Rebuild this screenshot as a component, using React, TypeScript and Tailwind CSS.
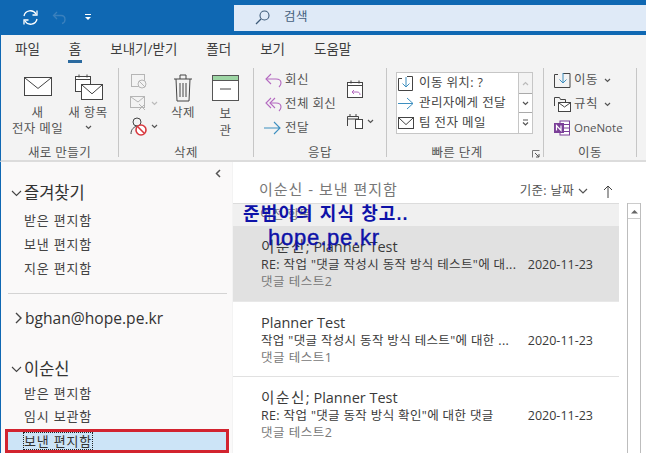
import React from "react";

const font = { fontFamily: '"Open Sans","Noto Sans CJK KR",sans-serif' };

const S = ({ w, h, children, className = "" }: { w: number; h: number; children: React.ReactNode; className?: string }) => (
  <svg width={w} height={h} viewBox={`0 0 ${w} ${h}`} fill="none" className={`shrink-0 ${className}`}>{children}</svg>
);

const Chev = ({ c = "#555" }: { c?: string }) => (
  <S w={7} h={5}><path d="M1 1l2.500 2.500L6 1" stroke={c} strokeWidth="1.2" /></S>
);

const Mail = ({ w = 28, h = 19 }: { w?: number; h?: number }) => (
  <S w={w} h={h}><rect x=".5" y=".5" width={w - 1} height={h - 1} fill="#fff" stroke="#444" /><path d={`M1 1l${w / 2 - 1} ${h * 0.55}L${w - 1} 1`} stroke="#444" /></S>
);

const Divider = () => <div className="w-px h-[89px] bg-[#c6c6c6] shrink-0" />;

const Group = ({ label, w, labelCls = "", children }: { label: string; w: number; labelCls?: string; children: React.ReactNode }) => (
  <div className="flex flex-col shrink-0 relative" style={{ width: w }}>
    <div className="h-[77px] flex">{children}</div>
    <div className={`text-center h-[16px] leading-[16px] text-[#555] ${labelCls}`}>{label}</div>
  </div>
);

const Reply = ({ color, double }: { color: string; double?: boolean }) => (
  <S w={20} h={16}>
    <path d="M7 2L2 7l5 5" stroke={color} strokeWidth="1.1" />
    {double && <path d="M11 2L6 7l5 5" stroke={color} strokeWidth="1.1" />}
    <path d={double ? "M6 7h6c4 0 5 2 5 4s-1 3-2 4" : "M2 7h10c4 0 5 2 5 4s-1 3-2 4"} stroke={color} strokeWidth="1.1" />
  </S>
);

const Fwd = () => (
  <S w={18} h={14}><path d="M0 7h16M10 1l6 6-6 6" stroke="#3d8fc0" strokeWidth="1.1" /></S>
);

const CalBase = ({ children }: { children?: React.ReactNode }) => (
  <S w={18} h={20}>
    <rect x="1.500" y="3.500" width="15" height="15" fill="#fff" stroke="#444" />
    <path d="M1.500 6.500h15M5 1.500v3M13 1.500v3" stroke="#444" />
    {children}
  </S>
);

const Tab = ({ t, active }: { t: string; active?: boolean }) => (
  <div className="relative h-[27px] pt-[1px] flex items-center text-[13.5px] text-[#3d3d3d]">
    {t}
    {active && <div className="absolute -left-[1px] -right-[1px] bottom-[-1px] h-[3px] bg-[#2b6a9f]" />}
  </div>
);

const Folder = ({ t, cls = "" }: { t: string; cls?: string }) => (
  <div className={`h-[24px] flex items-center pl-[23px] text-[13px] tracking-[0.8px] text-[#444] ${cls}`}>{t}</div>
);

const Head = ({ t, chevron = "down", cls = "" }: { t: string; chevron?: string; cls?: string }) => (
  <div className={`flex items-center pl-[10px] gap-[2px] text-[#333] ${cls}`}>
    {chevron === "down" ? (
      <S w={11} h={7}><path d="M1 1l4.500 4.500L10 1" stroke="#444" strokeWidth="1.1" /></S>
    ) : (
      <S w={11} h={12} className="ml-[2px] -mr-[1px]"><path d="M3 1l5 5-5 5" stroke="#444" strokeWidth="1.4" /></S>
    )}
    <span>{t}</span>
  </div>
);

const Msg = ({ from, sub, prev, cls = "" }: { from: React.ReactNode; sub: string; prev: string; cls?: string }) => (
  <div className={`h-[76px] pl-[28px] pr-[26px] pt-[11px] ${cls}`}>
    <div className="text-[14.500px] leading-[20px] text-[#3a3a3a]">{from}</div>
    <div className="flex justify-between leading-[16px] text-[#3a3a3a]">
      <span className="whitespace-nowrap text-[12.500px] tracking-[0.35px]">{sub}</span>
      <span className="text-[12.500px] whitespace-nowrap">2020-11-23</span>
    </div>
    <div className="text-[12.500px] tracking-[0.5px] leading-[16px] text-[#777] mt-[1px]">{prev}</div>
  </div>
);

const Name = () => <span className="tracking-[1.6px]">이순신</span>;

export default function App() {
  return (
    <div className="w-[646px] h-[453px] overflow-hidden relative bg-white flex flex-col" style={font}>
      {/* title bar */}
      <div className="h-[35px] bg-[#0f68b3] flex items-center shrink-0">
        <div className="w-[234px] flex items-center pl-[22px] shrink-0">
          <S w={17} h={17}>
            <path d="M2 7a6.500 6.500 0 0 1 12-2M15 10a6.500 6.500 0 0 1-12 2" stroke="#fff" strokeWidth="1.3" />
            <path d="M15 1.500V6h-4.500M2 15.500V11h4.500" stroke="#fff" strokeWidth="1.3" />
          </S>
          <S w={15} h={15} className="ml-[13px]">
            <path d="M5 2L1.500 5.500 5 9M2 5.500h7c3 0 4 2 4 4s-1 3.500-3 4" stroke="#3a80bd" strokeWidth="1.3" />
          </S>
          <S w={8} h={9} className="ml-[17px]">
            <path d="M1 1.500h6" stroke="#fff" /><path d="M1 4l3 3 3-3z" fill="#fff" />
          </S>
        </div>
        <div className="flex-1 h-[26px] bg-[#dfeaf7] flex items-center pl-[21px] gap-[14px] text-[12.500px] tracking-[0.4px] text-[#44607c]">
          <S w={15} h={15}>
            <circle cx="9.500" cy="5.500" r="4.500" stroke="#3d5a78" strokeWidth="1.1" />
            <path d="M6 9l-5 5" stroke="#3d5a78" strokeWidth="1.3" />
          </S>
          <span>검색</span>
        </div>
      </div>

      {/* tabs */}
      <div className="h-[27px] bg-[#f3f3f3] flex items-center gap-[29px] pl-[14px] shrink-0 border-l border-[#0f68b3]">
        <Tab t="파일" />
        <Tab t="홈" active />
        <Tab t="보내기/받기" />
        <Tab t="폴더" />
        <Tab t="보기" />
        <Tab t="도움말" />
      </div>

      {/* ribbon */}
      <div className="h-[100px] bg-[#f3f3f3] flex items-start pt-[6px] border-l border-[#0f68b3] border-b-2 border-b-[#dcdcdc] shrink-0 text-[12.500px] tracking-[0.4px] text-[#555]">
        <Group label="새로 만들기" w={117}>
          <div className="w-[51px] ml-[11px] flex flex-col items-center pt-[9px] leading-[16px] text-center">
            <Mail />
            <div className="mt-[9px]">새</div>
            <div className="whitespace-nowrap">전자 메일</div>
          </div>
          <div className="w-[50px] flex flex-col items-center pt-[5px] leading-[15px]">
            <div className="relative w-[29px] h-[30px]">
              <CalBase />
              <div className="absolute left-[7px] top-[11px]"><Mail w={22} h={16} /></div>
            </div>
            <div className="mt-[2px] whitespace-nowrap">새 항목</div>
            <div className="mt-[5px]"><Chev /></div>
          </div>
        </Group>
        <Divider />
        <Group label="삭제" w={134}>
          <div className="w-[44px] flex flex-col pl-[11px] pt-[5px] gap-[6px]">
            <S w={18} h={16}><rect x="1.500" y="1.500" width="13" height="12" stroke="#b5b5b5" /><circle cx="12" cy="11" r="4" fill="#f3f3f3" stroke="#b5b5b5" /><path d="M9 8l6 6" stroke="#b5b5b5" /></S>
            <div className="flex items-center gap-[3px]">
              <S w={18} h={16}><rect x=".5" y="1.500" width="14" height="11" stroke="#b5b5b5" /><path d="M1 2l7 5 6-5M9 9l6 6M15 9l-6 6" stroke="#b5b5b5" /></S>
              <Chev c="#bbb" />
            </div>
            <div className="flex items-center gap-[3px]">
              <S w={18} h={19}><circle cx="7" cy="5" r="4" stroke="#444" /><path d="M1 17c0-5 3-7 6-8" stroke="#444" /><circle cx="11" cy="13" r="5" fill="#fff" stroke="#d8383e" strokeWidth="1.6" /><path d="M8 10l6 6" stroke="#d8383e" strokeWidth="1.6" /></S>
              <Chev />
            </div>
          </div>
          <div className="w-[40px] flex flex-col items-center pt-[5px] leading-[16px]">
            <S w={22} h={30}>
              <path d="M2 6h18M4 6l1 22h12l1-22M8 6V2h6v4M8 10v14M11 10v14M14 10v14" stroke="#444" />
            </S>
            <div className="mt-[2px]">삭제</div>
          </div>
          <div className="w-[45px] flex flex-col items-center pt-[7px] leading-[17px]">
            <S w={27} h={26}>
              <rect x=".5" y=".5" width="26" height="5" fill="#9dd5a4" stroke="#555" />
              <rect x=".5" y="5.500" width="26" height="20" fill="#fff" stroke="#555" />
              <path d="M8 14h11" stroke="#444" />
            </S>
            <div className="mt-[4px]">보</div>
            <div>관</div>
          </div>
        </Group>
        <Divider />
        <Group label="응답" w={132}>
          <div className="w-[92px] pl-[10px] flex flex-col whitespace-nowrap">
            <div className="flex items-center gap-[1px] h-[24px]"><Reply color="#b469c0" />회신</div>
            <div className="flex items-center gap-[1px] h-[24px]"><Reply color="#b469c0" double />전체 회신</div>
            <div className="flex items-center gap-[3px] h-[24px]"><Fwd />전달</div>
          </div>
          <div className="flex flex-col pt-[11px] gap-[14px]">
            <CalBase><path d="M6 13l2-2M6 13l2 2M6 13h5c2 0 3 1 3 3" stroke="#b469c0" /></CalBase>
            <div className="flex items-center gap-[3px]">
              <S w={18} h={16}><path d="M1.500 13V3.500h11V6M1.500 6h11M4 1v3M10 1v3" stroke="#444" /><rect x="9.500" y="6.500" width="7" height="9" fill="#fff" stroke="#444" /></S>
              <Chev />
            </div>
          </div>
        </Group>
        <Divider />
        <Group label="빠른 단계" w={156} labelCls="pr-[16px]">
          <div className="ml-[9px] mt-[4px] w-[137px] h-[62px] bg-white border border-[#c6c6c6] flex">
            <div className="w-[121px] pl-[1px] flex flex-col leading-[20px] text-[#444] whitespace-nowrap overflow-hidden">
              <div className="flex items-center gap-[5px] h-[20px]">
                <S w={16} h={15}><path d="M.5 14.500V2.500H4M9 .5h5.500v14H.5" stroke="#444" /><path d="M8 1v10M4.500 7.500L8 11l3.500-3.500" stroke="#3d8fc0" /></S>
                이동 위치: ?
              </div>
              <div className="flex items-center gap-[5px] h-[20px]"><S w={16} h={13}><path d="M0 6.500h15M9 1l6 5.500-6 5.500" stroke="#3d8fc0" /></S>관리자에게 전달</div>
              <div className="flex items-center gap-[5px] h-[20px]"><Mail w={16} h={12} />팀 전자 메일</div>
            </div>
            <div className="w-[14px] border-l border-[#c6c6c6] flex flex-col">
              <div className="h-[20px] bg-[#f3f3f3] flex items-center justify-center"><S w={7} h={5}><path d="M1 4l2.500-2.500L6 4" stroke="#bbb" strokeWidth="1.2" /></S></div>
              <div className="h-[20px] border-y border-[#aaa] flex items-center justify-center"><Chev /></div>
              <div className="h-[20px] flex flex-col items-center justify-center"><S w={7} h={8}><path d="M1 1h5" stroke="#555" /><path d="M1 3.500l2.500 2.500L6 3.500" stroke="#555" strokeWidth="1.2" /></S></div>
            </div>
          </div>
          <div className="absolute right-[3px] bottom-[3px]">
            <S w={8} h={8}><path d="M.5 7.500v-7h7" stroke="#777" /><path d="M3 3l4 4M7 4v3H4" stroke="#555" /></S>
          </div>
        </Group>
        <Divider />
        <Group label="이동" w={92}>
          <div className="pl-[10px] flex flex-col whitespace-nowrap">
            <div className="flex items-center gap-[3px] h-[24px]">
              <S w={17} h={17}><path d="M.5 15.500V2.500H4M9 1.500h7v14H.5" stroke="#444" /><path d="M9 1v10M5.500 7.500L9 11l3.500-3.500" stroke="#3d8fc0" /></S>이동<span className="ml-[3px]"><Chev /></span>
            </div>
            <div className="flex items-center gap-[3px] h-[24px]">
              <S w={17} h={17}><path d="M.5 10V1.500h5l1 2h5V6" stroke="#444" /><rect x="4.500" y="6.500" width="12" height="9" fill="#fff" stroke="#444" /><path d="M5 7l5.500 4L16 7" stroke="#444" /></S>규칙<span className="ml-[3px]"><Chev /></span>
            </div>
            <div className="flex items-center gap-[4px] h-[24px] text-[11.500px] tracking-[0px]">
              <S w={16} h={16}><rect x="6" y="1" width="9.500" height="14" fill="#fff" stroke="#7b3f98" /><path d="M10 4.500h5M10 8h5M10 11.500h5" stroke="#7b3f98" /><rect y="3" width="10" height="10" fill="#7b3f98" /><path d="M2.500 10.500v-5l4.500 5v-5" stroke="#fff" strokeWidth="1.2" /></S>
              OneNote
            </div>
          </div>
        </Group>
        <Divider />
      </div>

      {/* body */}
      <div className="flex-1 flex min-h-0 bg-[#f3f3f3] border-l border-[#0f68b3]">
        <div className="w-[231px] h-full bg-[#faf9f9] flex flex-col relative shrink-0">
          <div className="absolute right-[11px] top-[7px]">
            <S w={6} h={9}><path d="M5 1L1.500 4.500 5 8" stroke="#555" strokeWidth="1.500" /></S>
          </div>
          <Head t="즐겨찾기" cls="mt-[19px] h-[26px] text-[16.500px]" />
          <div className="mt-[3px]">
            <Folder t="받은 편지함" />
            <Folder t="보낸 편지함" />
            <Folder t="지운 편지함" />
          </div>
          <div className="h-px bg-[#d4d4d4] ml-[7px] mr-[5px] mt-[12px]" />
          <Head t="bghan@hope.pe.kr" chevron="right" cls="mt-[12px] h-[26px] text-[15.600px]" />
          <Head t="이순신" cls="mt-[27px] h-[24px] text-[16.500px]" />
          <Folder t="받은 편지함" />
          <Folder t="임시 보관함" />
          <div className="ml-[4px] mr-[3px] mt-[1px] h-[25px] bg-[#cce4f7] border-[3px] border-[#d2232f] flex items-center pl-[16px] text-[13px] tracking-[0.8px] text-[#333]">
            <span className="outline-1 outline-dotted outline-[#222] leading-[16px]">보낸 편지함</span>
          </div>
        </div>

        <div className="flex-1 bg-white ml-[1px] flex flex-col relative min-w-0">
          <div className="h-[41px] flex items-end pb-[4px] pl-[26px] pr-[33px] justify-between text-[#777]">
            <span className="text-[15px] tracking-[1px] leading-[20px]">이순신 - 보낸 편지함</span>
            <span className="flex items-center text-[12.500px] tracking-[0.3px] text-[#555] leading-[16px]">
              기준: 날짜
              <S w={10} h={6} className="ml-[4px]"><path d="M1 1l4 4 4-4" stroke="#555" strokeWidth="1.2" /></S>
              <S w={10} h={13} className="ml-[15px]"><path d="M5 13V1M1 5l4-4 4 4" stroke="#444" /></S>
            </span>
          </div>
          <div className="flex flex-1 min-h-0">
            <div className="w-[386px] shrink-0 flex flex-col">
              <div className="h-[23px] bg-[#f0f0f0] border-t border-[#dcdcdc] text-[12.500px] tracking-[0.4px] text-[#777] pl-[27px] flex items-center">이전 항목</div>
              <Msg from={<><Name />; Planner Test</>} sub={'RE: 작업 "댓글 작성시 동작 방식 테스트"에 대...'} prev="댓글 테스트2" cls="bg-[#e1e1e1] border-b border-[#e8e8e8]" />
              <Msg from="Planner Test" sub={'작업 "댓글 작성시 동작 방식 테스트"에 대한 ...'} prev="댓글 테스트1" cls="border-b border-[#e1e1e1]" />
              <Msg from={<><Name />; Planner Test</>} sub={'RE: 작업 "댓글 동작 방식 확인"에 대한 댓글'} prev="댓글 테스트2" />
            </div>
            <div className="ml-[8px] w-[14px] border-x border-[#bdbdbd] h-full flex flex-col shrink-0">
              <div className="h-[16px] border-y border-[#ccc] flex items-center justify-center">
                <svg width="7" height="5"><path d="M0 4.500L3.500 1 7 4.500z" fill="#666" /></svg>
              </div>
            </div>
          </div>
        </div>
      </div>

      {/* watermark */}
      <div className="absolute left-[243px] top-[202px] text-[#0e12a8] whitespace-nowrap" style={{ fontFamily: '"Liberation Sans","Noto Sans CJK KR",sans-serif' }}>
        <div className="font-bold text-[18px] leading-[24px] tracking-[1.1px]">준범이의 지식 창고..</div>
        <div className="pl-[25px] text-[22px] leading-[24px] tracking-[0.8px] [-webkit-text-stroke:0.4px_#0e12a8]">hope.pe.kr</div>
      </div>
    </div>
  );
}
